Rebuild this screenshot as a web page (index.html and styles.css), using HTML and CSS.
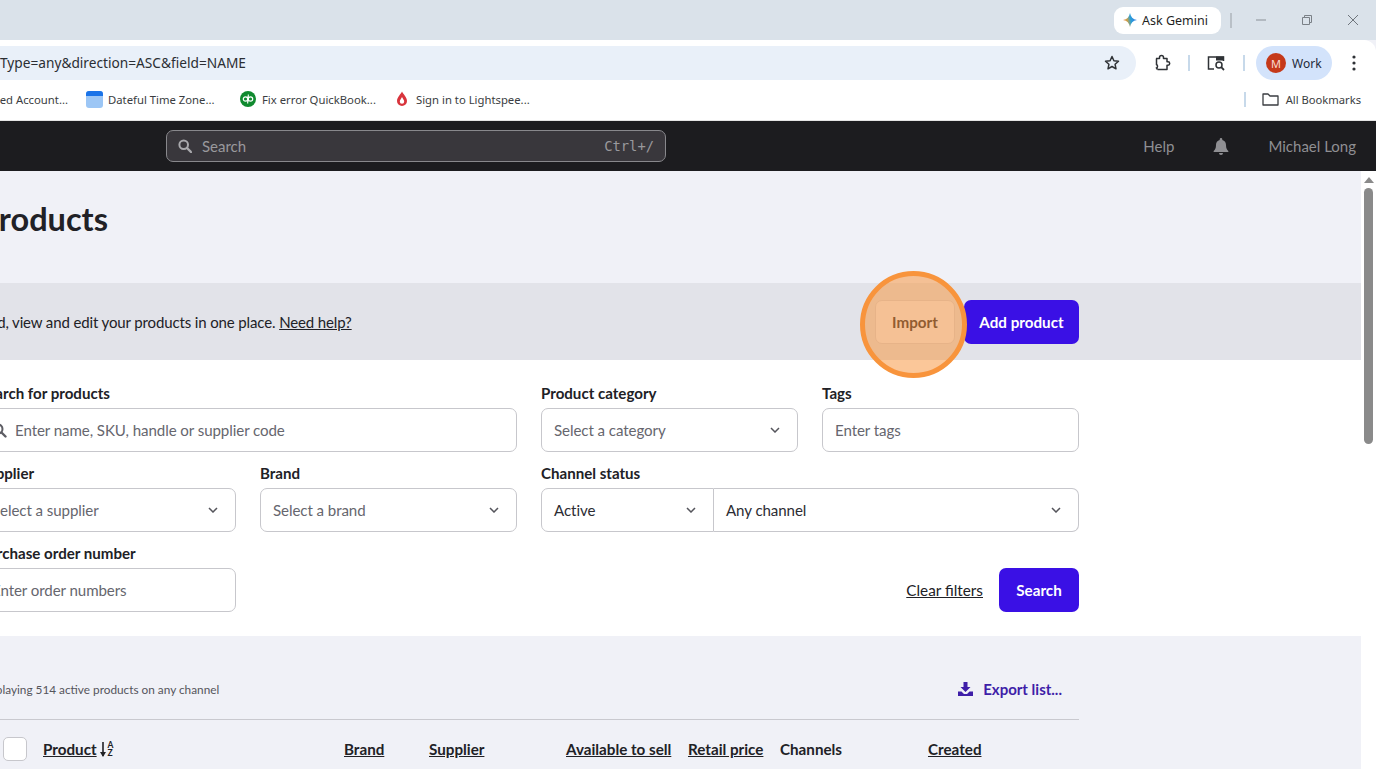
FILE: index.html
```html
<!DOCTYPE html>
<html lang="en">
<head>
    <meta charset="UTF-8">
    <title>Products</title>
    <link rel="stylesheet" href="styles.css">
</head>
<body>
    <div class="tabstrip">
        <div class="gemini">
            <svg width="16" height="16" viewBox="0 0 16 16"><defs><linearGradient id="gem" x1="0" y1="0.6" x2="1" y2="0.4"><stop offset="0" stop-color="#f0803c"/><stop offset=".3" stop-color="#c9a24a"/><stop offset=".55" stop-color="#2a9fd6"/><stop offset="1" stop-color="#3a78e8"/></linearGradient></defs><path d="M8 1c.6 3.800 2.900 6.300 7 7-4.100.7-6.400 3.200-7 7-.6-3.800-2.900-6.300-7-7 4.100-.7 6.400-3.200 7-7z" fill="url(#gem)"/></svg>
            <span>Ask Gemini</span>
        </div>
        <span class="strip-sep"></span>
        <div class="win-btns">
            <svg width="12" height="12" viewBox="0 0 12 12"><path d="M1 6h10" stroke="#8a9097" fill="none"/></svg>
            <svg width="12" height="12" viewBox="0 0 12 12"><path d="M1.500 3.500h7v7h-7zM3.500 3.500v-2h7v7h-2" stroke="#7a8087" fill="none"/></svg>
            <svg width="12" height="12" viewBox="0 0 12 12"><path d="M1 1l10 10M11 1L1 11" stroke="#6f757c" fill="none"/></svg>
        </div>
    </div>

    <div class="toolbar">
        <div class="omnibox">
            <span class="url">Type=any&amp;direction=ASC&amp;field=NAME</span>
            <svg width="18" height="18" viewBox="0 0 18 18"><path d="M9 2.500l1.900 4.200 4.600.5-3.400 3.100.9 4.500L9 12.500l-4 2.300.9-4.500-3.400-3.100 4.600-.5z" fill="none" stroke="#2f3236" stroke-width="1.500" stroke-linejoin="round"/></svg>
        </div>
        <div class="tool-icons">
            <svg class="ext" width="18" height="18" viewBox="0 0 18 18"><path d="M3 4.500h3.500V3.500a2 2 0 0 1 4 0v1H14v3.300h1a1.700 1.700 0 0 1 0 3.400h-1V15.500H4.500" fill="none" stroke="#2f3236" stroke-width="1.500" stroke-linejoin="round"/><path d="M3.500 4.500v6a2 2 0 0 1 0 3.500l1 1.500" fill="none" stroke="#2f3236" stroke-width="1.500"/></svg>
            <span class="tool-sep"></span>
            <svg class="lens" width="20" height="18" viewBox="0 0 20 18"><path d="M8 15H2.500V3h15v4" fill="none" stroke="#2f3236" stroke-width="1.500"/><rect x="10" y="2.500" width="8" height="4" fill="#2f3236"/><circle cx="13" cy="11" r="3" fill="none" stroke="#2f3236" stroke-width="1.500"/><path d="M15.200 13.200L18 16" stroke="#2f3236" stroke-width="1.800"/></svg>
            <span class="tool-sep"></span>
            <div class="profile"><span class="avatar">M</span><span>Work</span></div>
            <svg class="dots" width="4" height="16" viewBox="0 0 4 16"><circle cx="2" cy="2" r="1.600"/><circle cx="2" cy="8" r="1.600"/><circle cx="2" cy="14" r="1.600"/></svg>
        </div>
    </div>

    <div class="bookmarks">
        <span class="bm-cut">Verified Account...</span>
        <div class="bm bm-dateful">
            <svg width="17" height="17" viewBox="0 0 17 17"><rect width="17" height="17" rx="3" fill="#9cc6f5"/><path d="M0 5V3a3 3 0 0 1 3-3h11a3 3 0 0 1 3 3v2z" fill="#1a73e8"/></svg>
            <span>Dateful Time Zone...</span>
        </div>
        <div class="bm bm-qb">
            <svg width="16" height="16" viewBox="0 0 16 16"><circle cx="8" cy="8" r="8" fill="#108a2f"/><circle cx="5.500" cy="8" r="2.200" fill="none" stroke="#fff" stroke-width="1.200"/><circle cx="10.500" cy="8" r="2.200" fill="none" stroke="#fff" stroke-width="1.200"/><path d="M7.700 5.500v7M8.300 10.500v-7" stroke="#fff" stroke-width="1.100"/></svg>
            <span>Fix error QuickBook...</span>
        </div>
        <div class="bm bm-ls">
            <svg width="12" height="16" viewBox="0 0 12 16"><path d="M6 .5C7 3 11 6 11 10a5 5 0 0 1-10 0C1 6 5 3 6 .5z" fill="#d8343c"/><path d="M6 6c.5 1.500 2.200 2.800 2.200 4.500a2.200 2.200 0 0 1-4.400 0C3.800 8.800 5.500 7.500 6 6z" fill="#fff"/></svg>
            <span>Sign in to Lightspee...</span>
        </div>
        <div class="bm-all">
            <span class="tool-sep"></span>
            <svg width="17" height="14" viewBox="0 0 17 14"><path d="M1 2h5l2 2h8v9H1z" fill="none" stroke="#3a3d41" stroke-width="1.300" stroke-linejoin="round"/></svg>
            <span>All Bookmarks</span>
        </div>
    </div>

    <header class="appbar">
        <div class="global-search">
            <svg width="14" height="14" viewBox="0 0 14 14"><circle cx="5.700" cy="5.700" r="4.300" fill="none" stroke="#a9a9ad" stroke-width="2"/><path d="M9 9l4 4" stroke="#a9a9ad" stroke-width="2.400" stroke-linecap="round"/></svg>
            <span class="gs-text">Search</span>
            <span class="gs-key">Ctrl+/</span>
        </div>
        <nav class="appnav">
            <span class="nav-help">Help</span>
            <svg class="nav-bell" width="16" height="17" viewBox="0 0 16 17"><path d="M8 0a1.300 1.300 0 0 1 1.300 1.300v.6C11.700 2.500 13 4.500 13 7c0 3.500 1 4.700 2.300 6 .3.400 0 1-.5 1H1.200c-.5 0-.8-.6-.5-1C2 11.700 3 10.500 3 7c0-2.500 1.300-4.500 3.700-5.100v-.6A1.300 1.300 0 0 1 8 0zM6 15h4a2 2 0 0 1-4 0z" fill="#8f8f93"/></svg>
            <span>Michael Long</span>
        </nav>
    </header>

    <div class="viewport">
        <main class="page">
            <h1 class="title">Products</h1>

            <section class="banner">
                <div class="inner banner-row">
                    <p>Add, view and edit your products in one place. <a href="#">Need help?</a></p>
                    <div class="banner-btns">
                        <button class="btn btn-plain">Import</button>
                        <button class="btn btn-primary btn-add">Add product</button>
                    </div>
                </div>
            </section>

            <section class="filters">
                <div class="inner filter-grid">
                    <div class="field span-2">
                        <label>Search for products</label>
                        <div class="input">
                            <svg class="search-ico" width="15" height="15" viewBox="0 0 15 15"><circle cx="6" cy="6" r="4.500" fill="none" stroke="#5d5d64" stroke-width="2"/><path d="M9.500 9.500l4 4" stroke="#5d5d64" stroke-width="2.400" stroke-linecap="round"/></svg>
                            <span>Enter name, SKU, handle or supplier code</span>
                        </div>
                    </div>
                    <div class="field">
                        <label>Product category</label>
                        <div class="input select"><span>Select a category</span><svg class="chev" width="10" height="6" viewBox="0 0 10 6"><path d="M1 1l4 4 4-4"/></svg></div>
                    </div>
                    <div class="field">
                        <label>Tags</label>
                        <div class="input"><span>Enter tags</span></div>
                    </div>
                    <div class="field">
                        <label>Supplier</label>
                        <div class="input select"><span>Select a supplier</span><svg class="chev" width="10" height="6" viewBox="0 0 10 6"><path d="M1 1l4 4 4-4"/></svg></div>
                    </div>
                    <div class="field">
                        <label>Brand</label>
                        <div class="input select"><span>Select a brand</span><svg class="chev" width="10" height="6" viewBox="0 0 10 6"><path d="M1 1l4 4 4-4"/></svg></div>
                    </div>
                    <div class="field span-2">
                        <label>Channel status</label>
                        <div class="input-group">
                            <div class="input select group-a"><span class="filled">Active</span><svg class="chev" width="10" height="6" viewBox="0 0 10 6"><path d="M1 1l4 4 4-4"/></svg></div>
                            <div class="input select group-b"><span class="filled">Any channel</span><svg class="chev" width="10" height="6" viewBox="0 0 10 6"><path d="M1 1l4 4 4-4"/></svg></div>
                        </div>
                    </div>
                    <div class="field">
                        <label>Purchase order number</label>
                        <div class="input"><span>Enter order numbers</span></div>
                    </div>
                    <div class="filter-actions">
                        <a href="#" class="clear">Clear filters</a>
                        <button class="btn btn-primary btn-search">Search</button>
                    </div>
                </div>
            </section>

            <section class="results inner">
                <div class="results-top">
                    <span class="count">Displaying 514 active products on any channel</span>
                    <a href="#" class="export">
                        <svg width="15" height="14" viewBox="0 0 15 14"><path d="M5.500 0h4v5h3L7.500 10 2.500 5h3zM0 9.500h3.500L6 12h3l2.500-2.500H15V14H0z" fill="#3e1ea8"/></svg>
                        <span>Export list...</span>
                    </a>
                </div>
                <div class="table-head">
                    <span class="check"></span>
                    <span class="th-sort"><a href="#">Product</a>
                        <svg width="6" height="15" viewBox="0 0 6 15"><path d="M3 0v14" stroke="#212126" stroke-width="1.600"/><path d="M0 10h6l-3 5z" fill="#212126"/></svg>
                        <span class="az"><span>A</span><span>Z</span></span>
                    </span>
                    <a href="#">Brand</a>
                    <a href="#">Supplier</a>
                    <a href="#">Available to sell</a>
                    <a href="#">Retail price</a>
                    <span>Channels</span>
                    <a href="#">Created</a>
                </div>
            </section>
        </main>

        <div class="scrollbar">
            <svg width="10" height="6" viewBox="0 0 10 6"><path d="M5 0l5 6H0z" fill="#8a8a8a"/></svg>
            <span class="thumb"></span>
        </div>

        <span class="spotlight"></span>
    </div>
</body>
</html>
```

FILE: styles.css
```css
* { box-sizing: border-box; }
html, body { margin: 0; height: 769px; overflow: hidden; }
body { font-family: "Lato", sans-serif; color: #212126; background: #f0f1f7; width: 1376px; }
a { color: inherit; }

/* browser chrome */
.tabstrip { height: 40px; background: #dae2ea; display: flex; align-items: center; justify-content: flex-end; font-family: "Noto Sans", sans-serif; }
.gemini { width: 107px; height: 27px; background: #fff; border-radius: 9px; display: flex; align-items: center; gap: 4px; padding-left: 8px; font-size: 12.5px; color: #1f1f1f; margin-right: 9px; }
.strip-sep { width: 2px; height: 15px; background: #b9c0c7; margin-right: 20px; }
.win-btns { display: flex; gap: 34px; width: 124px; padding-left: 3px; }

.toolbar { height: 46px; background: #fff; display: flex; align-items: center; justify-content: space-between; border-radius: 0 12px 0 0; font-family: "Noto Sans", sans-serif; }
.omnibox { width: 1136px; height: 34px; background: #e9f0f9; border-radius: 0 17px 17px 0; display: flex; align-items: center; justify-content: space-between; padding-right: 15px; }
.url { font-size: 13.7px; color: #2b2e33; margin-bottom: 1px; }
.tool-icons { display: flex; align-items: center; width: 240px; height: 34px; padding-left: 17px; }
.tool-sep { width: 2px; height: 16px; background: #c7d9ea; display: block; }
.ext { margin-right: 17px; }
.lens { margin: 0 17px 0 16px; }
.profile { width: 76px; height: 34px; margin-left: 11px; background: #d3e3fb; border-radius: 17px; display: flex; align-items: center; gap: 6px; padding-left: 10px; font-size: 12px; color: #1f2a3a; }
.avatar { width: 20px; height: 20px; border-radius: 50%; background: #c5391a; color: #f8d9cf; font-size: 11px; display: flex; align-items: center; justify-content: center; }
.dots { margin-left: 20px; fill: #2f3236; }

.bookmarks { height: 35px; background: #fff; display: flex; align-items: center; font-family: "Noto Sans", sans-serif; font-size: 11.3px; color: #3a3d41; border-bottom: 1px solid #e4e4e4; padding-bottom: 8px; }
.bm-cut { width: 68px; display: flex; justify-content: flex-end; white-space: nowrap; }
.bm { display: flex; align-items: center; white-space: nowrap; }
.bm-dateful { margin-left: 18px; gap: 5px; width: 154px; }
.bm-qb { gap: 6px; width: 156px; }
.bm-ls { gap: 8px; }
.bm-all { margin-left: auto; display: flex; align-items: center; gap: 7px; padding-right: 15px; font-size: 11.2px; }
.bm-all .tool-sep { height: 15px; margin-right: 9px; }

/* app header */
.appbar { height: 50px; background: #1c1c1f; display: flex; align-items: center; justify-content: space-between; padding: 0 20px 0 166px; }
.global-search { width: 500px; height: 32px; background: #39373c; border: 1px solid #88888c; border-radius: 7px; display: flex; align-items: center; padding: 0 11px; gap: 10px; }
.gs-text { font-size: 15px; color: #99999d; }
.gs-key { margin-left: auto; font-family: "DejaVu Sans Mono", monospace; font-size: 13.8px; color: #99999d; }
.appnav { display: flex; align-items: center; font-size: 15px; color: #8f8f93; }
.nav-help { margin-right: 39px; }
.nav-bell { margin-right: 39px; }

/* page */
.viewport { position: relative; display: flex; height: 598px; overflow: hidden; }
.page { width: 1361px; flex: none; overflow: hidden; }
.inner { margin-left: -21px; width: 1100px; }
.title { margin: 28px 0 0 -21px; font-size: 32.5px; line-height: 40px; font-weight: 700; height: 84px; }

.banner { height: 77px; background: #e2e3e9; }
.banner-row { height: 100%; display: flex; align-items: center; justify-content: space-between; font-size: 15px; letter-spacing: -0.13px; }
.banner-row p { margin: 0; }
.banner-btns { display: flex; gap: 9px; letter-spacing: 0; }

.btn { height: 44px; border-radius: 7px; font-family: "Lato", sans-serif; font-size: 15.2px; font-weight: 700; border: 1px solid transparent; padding: 0; }
.btn-plain { width: 80px; background: #f3f3f6; border-color: #d6d6dc; color: #212126; }
.btn-primary { background: #3a10e5; color: #fff; }
.btn-add { width: 115px; }
.btn-search { width: 80px; }

.filters { height: 276px; background: #fff; padding-top: 23px; }
.filter-grid { display: grid; grid-template-columns: repeat(4, 257px); column-gap: 24px; row-gap: 11px; font-size: 15.1px; }
.span-2 { grid-column: span 2; }
.field label { display: block; font-weight: 700; line-height: 20px; margin-bottom: 5px; }
.input { height: 44px; border: 1px solid #c7c7cc; border-radius: 7px; display: flex; align-items: center; padding: 0 12px; color: #66666e; background: #fff; letter-spacing: -0.08px; }
.select { justify-content: space-between; padding-right: 17px; }
.search-ico { margin-right: 8px; }
.chev { fill: none; stroke: #55555c; stroke-width: 1.500; }
.input-group { display: flex; }
.group-a { width: 173px; border-radius: 7px 0 0 7px; }
.group-b { flex: 1; border-radius: 0 7px 7px 0; border-left: none; }
.filled { color: #2c2c33; }
.filter-actions { grid-column: 2 / span 3; display: flex; align-items: flex-end; justify-content: flex-end; gap: 16px; }
.clear { line-height: 44px; font-size: 15.3px; }

.results-top { height: 84px; border-bottom: 1px solid #c9c9cf; display: flex; align-items: center; justify-content: space-between; padding-top: 23px; }
.count { font-size: 11.8px; color: #55555c; }
.export { display: flex; align-items: center; gap: 10px; font-size: 15px; font-weight: 700; color: #3e1ea8; text-decoration: none; padding-right: 17px; }
.table-head { display: grid; grid-template-columns: 40px 301px 85px 137px 122px 92px 148px auto; align-items: center; padding: 17px 0 0 24px; font-size: 15.2px; font-weight: 700; line-height: 24px; }
.check { width: 24px; height: 24px; background: #fff; border: 1px solid #c7c7cc; border-radius: 5px; }
.th-sort { display: flex; align-items: center; gap: 3px; }
.az { display: flex; flex-direction: column; font-size: 8.500px; line-height: 8px; font-weight: 700; margin-left: -1px; }

/* browser scrollbar */
.scrollbar { width: 15px; background: #fff; display: flex; flex-direction: column; align-items: center; padding-top: 6px; gap: 5px; }
.thumb { width: 9px; height: 256px; background: #8a8a8a; border-radius: 5px; }

/* screenshot guide marker */
.spotlight { position: absolute; left: 860px; top: 100px; width: 107px; height: 107px; border-radius: 50%; border: 5px solid #f8943c; background: rgba(248, 148, 60, 0.52); }
```
